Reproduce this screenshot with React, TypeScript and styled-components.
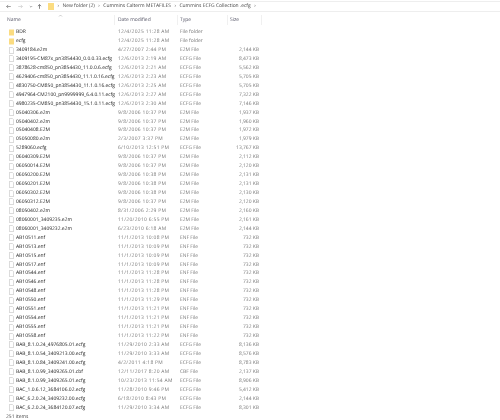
import React from "react";
import styled, { createGlobalStyle } from "styled-components";

const Global = createGlobalStyle`
  html, body { margin: 0; padding: 0; background: #fff; }
  body { width: 500px; height: 420px; overflow: hidden; }
`;

const Window = styled.div`
  width: 500px;
  height: 420px;
  display: flex;
  flex-direction: column;
  font-family: "Open Sans", "Liberation Sans", sans-serif;
  font-size: 4.95px;
  text-rendering: geometricPrecision;
  color: #444;
  background: #fff;
  overflow: hidden;
  filter: blur(0.25px);
`;

const Toolbar = styled.div`
  height: 9px;
  margin-top: 1px;
  display: flex;
  align-items: center;
  border-top: 1px solid #eee;
  border-bottom: 1px solid #eee;
  padding-left: 6px;
  color: #444;
`;

const NavIcons = styled.div`
  display: grid;
  grid-template-columns: 12px 11px 8px 11px;
  align-items: center;
`;

const Crumbs = styled.div`
  display: flex;
  align-items: center;
  gap: 3.5px;
  white-space: nowrap;
`;

const ColumnsGrid = `
  display: grid;
  grid-template-columns: 115px 63px 50px 34px;
`;

const Header = styled.div`
  ${ColumnsGrid}
  height: 10px;
  margin-top: 3px;
  margin-bottom: 3px;
  align-items: center;
  color: #556;
`;

const HeadCell = styled.div<{ $pad: number }>`
  height: 10px;
  line-height: 10px;
  padding-left: ${(p) => p.$pad}px;
  border-right: 1px solid #f0f0f0;
  position: relative;
`;

const SortCaret = styled.svg`
  position: absolute;
  left: 58px;
  top: -1px;
`;

const List = styled.div`
  display: flex;
  flex-direction: column;
`;

const Row = styled.div`
  ${ColumnsGrid}
  height: 8.95px;
  align-items: center;
  white-space: nowrap;
`;

const NameCell = styled.div`
  display: flex;
  align-items: center;
  gap: 2px;
  padding-left: 9px;
  color: #222;
`;

const DateCell = styled.div`
  color: #777;
  padding-left: 3px;
  letter-spacing: 0.3px;
`;

const TypeCell = styled.div`
  color: #777;
  padding-left: 2px;
`;

const SizeCell = styled.div`
  color: #777;
  text-align: right;
  padding-right: 3px;
`;

const Status = styled.div`
  margin-top: 2px;
  padding-left: 6px;
  color: #444;
`;

const FolderIcon = () => (
  <svg width="5" height="7" viewBox="0 0 5 7">
    <rect x="0" y="0.5" width="5" height="6" fill="#fbdc81" />
  </svg>
);

const FileIcon = () => (
  <svg width="5" height="7" viewBox="0 0 5 7">
    <path d="M.4.4h2.9l1.3 1.3v4.9H.4z" fill="#fff" stroke="#b0b0b0" strokeWidth=".5" />
  </svg>
);

const Arrow = ({ dir, color }: { dir: "left" | "right" | "up"; color: string }) => {
  const rotate = dir === "left" ? 0 : dir === "right" ? 180 : 90;
  return (
    <svg width="5" height="5" viewBox="0 0 5 5" style={{ transform: `rotate(${rotate}deg)` }}>
      <path d="M4.8 2.5H.6M2.2.9L.6 2.5l1.6 1.6" fill="none" stroke={color} strokeWidth=".7" />
    </svg>
  );
};

const Chevron = () => (
  <svg width="4" height="7" viewBox="0 0 4 7">
    <path d="M.8 3L2 4.2 3.2 3" fill="none" stroke="#777" strokeWidth=".6" />
  </svg>
);

const rows: [string, string, string, string][] = [
  ["BDR", "12/4/2025 11:28 AM", "File folder", ""],
  ["ecfg", "12/4/2025 11:28 AM", "File folder", ""],
  ["3409184.e2m", "4/27/2007 2:44 PM", "E2M File", "2,144 KB"],
  ["3409195-CM87x_pn3854430_0.0.0.33.ecfg", "12/6/2013 2:19 AM", "ECFG File", "8,473 KB"],
  ["3878628-cm850_pn3854430_11.0.0.6.ecfg", "12/6/2013 2:21 AM", "ECFG File", "5,562 KB"],
  ["4629406-cm850_pn3854430_11.1.0.16.ecfg", "12/6/2013 2:23 AM", "ECFG File", "5,705 KB"],
  ["4830750-CM850_pn3854430_11.1.0.16.ecfg", "12/6/2013 2:25 AM", "ECFG File", "5,705 KB"],
  ["4947964-CM2100_pn9999999_6.4.0.11.ecfg", "12/6/2013 2:27 AM", "ECFG File", "7,322 KB"],
  ["4980235-CM850_pn3854430_15.1.0.11.ecfg", "12/6/2013 2:30 AM", "ECFG File", "7,146 KB"],
  ["05040306.e2m", "9/8/2006 10:37 PM", "E2M File", "1,937 KB"],
  ["05040402.e2m", "9/8/2006 10:37 PM", "E2M File", "1,960 KB"],
  ["05040408.E2M", "9/8/2006 10:37 PM", "E2M File", "1,972 KB"],
  ["05050080.e2m", "2/3/2007 3:37 PM", "E2M File", "1,979 KB"],
  ["5289060.ecfg", "6/10/2013 12:51 PM", "ECFG File", "13,767 KB"],
  ["06040309.E2M", "9/8/2006 10:37 PM", "E2M File", "2,112 KB"],
  ["06050014.E2M", "9/8/2006 10:37 PM", "E2M File", "2,120 KB"],
  ["06050200.E2M", "9/8/2006 10:38 PM", "E2M File", "2,131 KB"],
  ["06050201.E2M", "9/8/2006 10:38 PM", "E2M File", "2,131 KB"],
  ["06050302.E2M", "9/8/2006 10:38 PM", "E2M File", "2,130 KB"],
  ["06050312.E2M", "9/8/2006 10:37 PM", "E2M File", "2,120 KB"],
  ["08050402.e2m", "8/31/2006 2:29 PM", "E2M File", "2,160 KB"],
  ["08060001_3409235.e2m", "11/20/2010 6:55 PM", "E2M File", "2,161 KB"],
  ["08060001_3409232.e2m", "6/23/2010 6:18 AM", "E2M File", "2,144 KB"],
  ["AB10511.enf", "11/1/2013 10:08 PM", "ENF File", "732 KB"],
  ["AB10513.enf", "11/1/2013 10:09 PM", "ENF File", "732 KB"],
  ["AB10515.enf", "11/1/2013 10:09 PM", "ENF File", "732 KB"],
  ["AB10517.enf", "11/1/2013 10:09 PM", "ENF File", "732 KB"],
  ["AB10544.enf", "11/1/2013 11:28 PM", "ENF File", "732 KB"],
  ["AB10546.enf", "11/1/2013 11:28 PM", "ENF File", "732 KB"],
  ["AB10548.enf", "11/1/2013 11:28 PM", "ENF File", "732 KB"],
  ["AB10550.enf", "11/1/2013 11:29 PM", "ENF File", "732 KB"],
  ["AB10551.enf", "11/1/2013 11:21 PM", "ENF File", "732 KB"],
  ["AB10554.enf", "11/1/2013 11:21 PM", "ENF File", "732 KB"],
  ["AB10555.enf", "11/1/2013 11:21 PM", "ENF File", "732 KB"],
  ["AB10558.enf", "11/1/2013 11:22 PM", "ENF File", "732 KB"],
  ["BAB_8.1.0.24_4976805.01.ecfg", "11/29/2010 2:33 AM", "ECFG File", "8,136 KB"],
  ["BAB_8.1.0.54_3409213.00.ecfg", "11/29/2010 3:33 AM", "ECFG File", "8,576 KB"],
  ["BAB_8.1.0.84_3409241.00.ecfg", "4/2/2011 4:18 PM", "ECFG File", "8,783 KB"],
  ["BAB_8.1.0.99_3409265.01.cbf", "12/11/2017 8:20 AM", "CBF File", "2,137 KB"],
  ["BAB_8.1.0.99_3409265.01.ecfg", "10/23/2013 11:54 AM", "ECFG File", "8,906 KB"],
  ["BAC_1.0.6.12_3684106.02.ecfg", "11/28/2010 9:46 PM", "ECFG File", "5,412 KB"],
  ["BAC_6.2.0.24_3409232.00.ecfg", "6/18/2010 8:43 PM", "ECFG File", "2,144 KB"],
  ["BAC_6.2.0.24_3684120.07.ecfg", "11/29/2010 3:34 AM", "ECFG File", "8,301 KB"],
];

export default function App() {
  return (
    <>
      <Global />
      <Window>
        <Toolbar>
          <NavIcons>
            <Arrow dir="left" color="#777" />
            <Arrow dir="right" color="#ccc" />
            <Chevron />
            <Arrow dir="up" color="#555" />
          </NavIcons>
          <Crumbs>
            <svg width="6" height="7" viewBox="0 0 6 7">
              <rect width="6" height="7" fill="#fbdc81" />
            </svg>
            <span>›</span>
            <span>New folder (2)</span>
            <span>›</span>
            <span>Cummins Calterm METAFILES</span>
            <span>›</span>
            <span>Cummins ECFG Collection .ecfg</span>
            <span>›</span>
          </Crumbs>
        </Toolbar>
        <Header>
          <HeadCell $pad={7}>
            Name
            <SortCaret width="5" height="3" viewBox="0 0 5 3">
              <path d="M1 2.5l1.5-1.5L4 2.5" fill="none" stroke="#999" strokeWidth=".5" />
            </SortCaret>
          </HeadCell>
          <HeadCell $pad={3}>Date modified</HeadCell>
          <HeadCell $pad={2}>Type</HeadCell>
          <HeadCell $pad={2}>Size</HeadCell>
        </Header>
        <List>
          {rows.map(([name, date, type, size]) => (
            <Row key={name}>
              <NameCell>
                {type === "File folder" ? <FolderIcon /> : <FileIcon />}
                {name}
              </NameCell>
              <DateCell>{date}</DateCell>
              <TypeCell>{type}</TypeCell>
              <SizeCell>{size}</SizeCell>
            </Row>
          ))}
        </List>
        <Status>251 items</Status>
      </Window>
    </>
  );
}
